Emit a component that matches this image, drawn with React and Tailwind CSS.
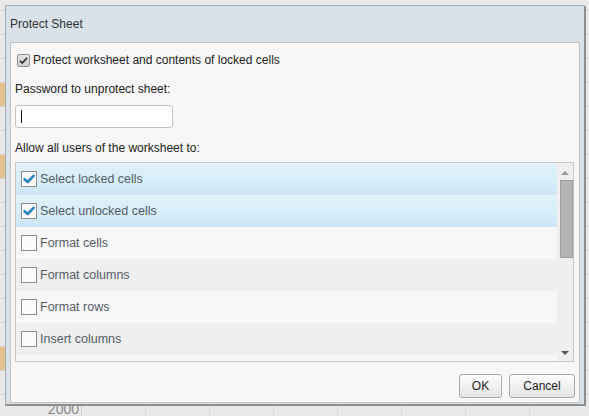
import React from "react";

const font = "font-['Liberation_Sans',Arial,sans-serif]";

// spreadsheet rows behind the dialog (24px rows, first one cut)
const bgRows = Array.from({ length: 17 }, (_, i) => i);
const tanRows = [3, 6, 14];

const options = [
  { label: "Select locked cells", checked: true },
  { label: "Select unlocked cells", checked: true },
  { label: "Format cells", checked: false },
  { label: "Format columns", checked: false },
  { label: "Format rows", checked: false },
  { label: "Insert columns", checked: false },
  { label: "Insert rows", checked: false },
];

function Sheet() {
  return (
    <div className="flex flex-col">
      <div className="h-[11px] border-b border-[#d6d6d6]" />
      {bgRows.map((i) => (
        <div key={i} className="flex h-[24px] border-b border-[#d6d6d6]">
          <div
            className={`w-[82px] shrink-0 border-r border-[#d0d0d0] flex items-center justify-end pr-[2px] pt-[6px] text-[14px] text-[#8a8a8a] ${
              tanRows.includes(i) ? "bg-[#e3c28d]" : ""
            }`}
          >
            {i === 16 ? "2000" : ""}
          </div>
          {Array.from({ length: 8 }, (_, c) => (
            <div key={c} className="w-[64px] shrink-0 border-r border-[#dadada]" />
          ))}
        </div>
      ))}
    </div>
  );
}

function BlueCheck() {
  return (
    <svg width="14" height="14" viewBox="0 0 14 14">
      <path d="M2.5 7.2 L5.6 10 L11.6 3.8" fill="none" stroke="#2a82c6" strokeWidth="2.6" strokeLinecap="round" strokeLinejoin="round" />
    </svg>
  );
}

function ListRow({ label, checked, idx }) {
  const bg =
    idx < 2
      ? "bg-linear-to-b from-[#e1f1f9] via-[#d7eef8] to-[#cfe4f6]"
      : idx % 2 === 0
      ? "bg-[#f7f7f7]"
      : "bg-[#efefef]";
  return (
    <div className={`flex items-center h-[32px] shrink-0 pl-[5px] ${bg}`}>
      <div className="w-[16px] h-[16px] border border-[#8c8c8c] bg-[#fafafa] flex items-center justify-center">
        {checked && <BlueCheck />}
      </div>
      <span className="ml-[3px] text-[12.5px] text-[#555c66]">{label}</span>
    </div>
  );
}

export default function App() {
  return (
    <div className={`relative w-[589px] h-[416px] overflow-hidden bg-[#e9e9e9] ${font}`}>
      <Sheet />

      {/* Protect Sheet dialog */}
      <div className="absolute left-[5px] top-[5px] w-[581px] bg-[#d9e1e9] border-t border-l border-[#a8adb3] border-r-2 border-b-2 border-r-[#8e8e8e] border-b-[#8e8e8e] rounded-tr-[3px] flex flex-col">
        <div className="h-[36px] flex items-center pl-[4px] text-[12px] text-[#333]">Protect Sheet</div>

        <div className="mx-[4px] mb-[1px] border border-[#c4c4c4] bg-[#f7f7f7] flex flex-col pl-[4px] pr-[5px] pt-[8px] pb-[4px]">
          {/* protect checkbox */}
          <div className="flex items-center h-[18px]">
            <div className="ml-[2px] w-[13px] h-[13px] rounded-[2px] border border-[#8f8f8f] bg-linear-to-b from-[#e6e6e6] to-[#cfcfcf] flex items-center justify-center">
              <svg width="11" height="11" viewBox="0 0 11 11">
                <path d="M2 5.8 L4.3 8 L9 2.8" fill="none" stroke="#3a3a3a" strokeWidth="1.8" strokeLinejoin="round" />
              </svg>
            </div>
            <span className="ml-[3px] text-[12px] text-[#222]">Protect worksheet and contents of locked cells</span>
          </div>

          <div className="mt-[12px] h-[16px] flex items-center text-[12px] text-[#222]">Password to unprotect sheet:</div>

          <div className="mt-[8px] w-[158px] h-[23px] rounded-[3px] border border-[#c2c2c2] bg-white flex items-center pl-[5px]">
            <div className="w-[1px] h-[13px] bg-[#111]" />
          </div>

          <div className="mt-[12px] h-[16px] flex items-center text-[12px] text-[#222]">Allow all users of the worksheet to:</div>

          {/* options list */}
          <div className="mt-[6px] h-[200px] border border-[#c8c8c8] flex overflow-hidden">
            <div className="flex-1 flex flex-col overflow-hidden">
              {options.map((o, i) => (
                <ListRow key={o.label} idx={i} {...o} />
              ))}
            </div>
            <div className="w-[16px] bg-[#efefef] flex flex-col items-center">
              <svg className="mt-[8px]" width="8" height="4" viewBox="0 0 8 4">
                <path d="M0 4 L4 0 L8 4 Z" fill="#9a9a9a" />
              </svg>
              <div className="mt-[5px] ml-[2px] w-[13px] h-[78px] bg-[#b4b4b4] border border-[#9c9c9c]" />
              <div className="flex-1" />
              <svg className="mb-[6px]" width="8" height="4" viewBox="0 0 8 4">
                <path d="M0 0 L8 0 L4 4 Z" fill="#555" />
              </svg>
            </div>
          </div>

          {/* buttons */}
          <div className="mt-[12px] flex justify-end gap-[7px] mr-[-1px]">
            <button className="w-[43px] h-[24px] rounded-[3px] border border-[#a9a9a9] bg-linear-to-b from-[#fdfdfd] to-[#e4e4e4] text-[12px] text-[#222]">
              OK
            </button>
            <button className="w-[66px] h-[24px] rounded-[3px] border border-[#a9a9a9] bg-linear-to-b from-[#fdfdfd] to-[#e4e4e4] text-[12px] text-[#222]">
              Cancel
            </button>
          </div>
        </div>
      </div>
    </div>
  );
}
